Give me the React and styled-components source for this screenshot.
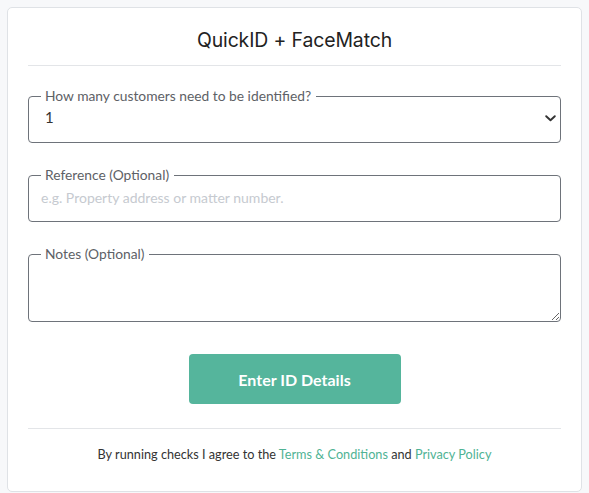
import React from "react";
import styled, { createGlobalStyle } from "styled-components";

const Global = createGlobalStyle`
  html, body { margin: 0; padding: 0; background: #f7f8fa; }
  body { padding: 7px; font-family: Lato, "Liberation Sans", sans-serif; color: #333; }
  * { box-sizing: border-box; }
`;

const Card = styled.div`
  background: #fff;
  border: 1px solid #dfe2e6;
  border-radius: 5px;
  padding: 20px 20px 28px;
  display: flex;
  flex-direction: column;
`;

const Title = styled.h1`
  margin: 0;
  font-family: Inter, "Noto Sans", sans-serif;
  font-weight: 400;
  font-size: 19.4px;
  line-height: 24px;
  text-align: center;
  color: #222;
  letter-spacing: -0.1px;
`;

const Divider = styled.hr`
  border: 0;
  border-top: 1px solid #e3e5e8;
  margin: ${(p) => p.$mt}px 0 0;
  width: 100%;
`;

const Form = styled.form`
  display: flex;
  flex-direction: column;
  gap: 24px;
  margin-top: 22px;
`;

const Field = styled.fieldset`
  margin: 0;
  padding: 0;
  border: 1px solid #6e737a;
  border-radius: 4px;
  min-width: 0;
  position: relative;
`;

const Legend = styled.legend`
  margin-left: 12px;
  padding: 0 5px 0 4px;
  font-size: 13.8px;
  line-height: 16px;
  color: #5d6166;
`;

const SelectWrap = styled.div`
  position: relative;
`;

const Select = styled.select`
  appearance: none;
  -webkit-appearance: none;
  display: block;
  width: 100%;
  height: 38px;
  border: 0;
  background: transparent;
  padding: 0 30px 13px 16px;
  font-family: Lato, "Liberation Sans", sans-serif;
  font-size: 15px;
  color: #333;
  outline: none;
`;

const Chevron = styled.svg`
  position: absolute;
  right: 4px;
  top: 11px;
  pointer-events: none;
`;

const Input = styled.input`
  display: block;
  width: 100%;
  height: 38px;
  border: 0;
  background: transparent;
  padding: 0 12px 9px 12px;
  font-family: Lato, "Liberation Sans", sans-serif;
  font-size: 14px;
  color: #333;
  outline: none;
  &::placeholder { color: #c6cad0; }
`;

const TextArea = styled.textarea`
  display: block;
  width: 100%;
  height: 59px;
  border: 0;
  background: transparent;
  padding: 4px 12px;
  font-family: Lato, "Liberation Sans", sans-serif;
  font-size: 14px;
  resize: vertical;
  outline: none;
`;

const Button = styled.button`
  align-self: center;
  margin-top: 8px;
  width: 212px;
  height: 50px;
  border: 0;
  border-radius: 4px;
  background: #55b59c;
  color: #fff;
  font-family: Lato, "Liberation Sans", sans-serif;
  font-weight: 700;
  font-size: 16px;
  cursor: pointer;
`;

const Footer = styled.p`
  margin: 16px 0 0;
  text-align: center;
  font-size: 12.7px;
  line-height: 18px;
  color: #333;
`;

const Link = styled.a`
  color: #4fb394;
  text-decoration: none;
`;

export default function App() {
  return (
    <>
      <Global />
      <Card>
        <Title>QuickID + FaceMatch</Title>
        <Divider $mt={13} />
        <Form onSubmit={(e) => e.preventDefault()}>
          <Field>
            <Legend>How many customers need to be identified?</Legend>
            <SelectWrap>
              <Select defaultValue="1">
                <option value="1">1</option>
                <option value="2">2</option>
                <option value="3">3</option>
              </Select>
              <Chevron width="11" height="7" viewBox="0 0 11 7">
                <path d="M1.2 1.2 L5.5 5.3 L9.8 1.2" fill="none" stroke="#333" strokeWidth="1.9" strokeLinecap="round" strokeLinejoin="round" />
              </Chevron>
            </SelectWrap>
          </Field>
          <Field>
            <Legend>Reference (Optional)</Legend>
            <Input placeholder="e.g. Property address or matter number." />
          </Field>
          <Field>
            <Legend>Notes (Optional)</Legend>
            <TextArea />
          </Field>
          <Button type="submit">Enter ID Details</Button>
        </Form>
        <Divider $mt={24} />
        <Footer>
          By running checks I agree to the <Link href="#">Terms &amp; Conditions</Link> and{" "}
          <Link href="#">Privacy Policy</Link>
        </Footer>
      </Card>
    </>
  );
}
